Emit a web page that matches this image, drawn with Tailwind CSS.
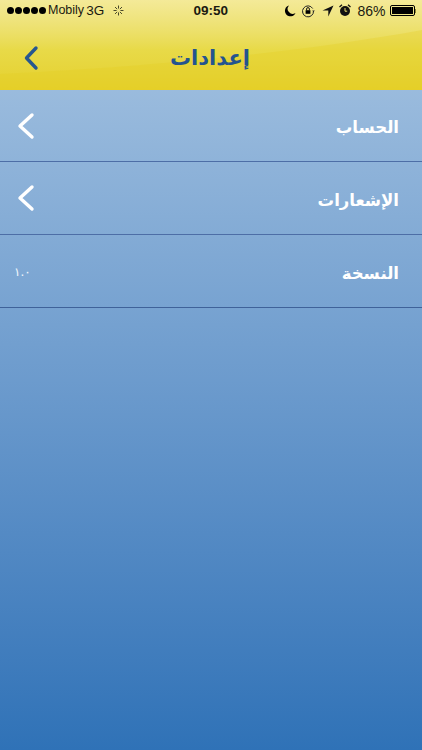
<!DOCTYPE html>
<html lang="ar">

<head>
  <meta charset="UTF-8">
  <meta name="viewport" content="width=device-width, initial-scale=1.0">
  <script src="https://cdn.jsdelivr.net/npm/@tailwindcss/browser@4"></script>
  <title>إعدادات</title>
</head>

<body class="m-0 overflow-hidden">
  <div class="flex flex-col w-[422px] h-[750px] bg-gradient-to-b from-[#a8c5e2] to-[#2f72b7] font-['Liberation_Sans',sans-serif]">

    <!-- header with status bar -->
    <div class="relative h-[90px] shrink-0 overflow-hidden bg-gradient-to-b from-[#f4ea98] via-[#e8da48] via-55% to-[#e5d02a]">
      <svg class="absolute inset-0" width="422" height="90" viewBox="0 0 422 90">
        <path d="M0 74 C120 68 280 56 422 30 L422 90 L0 90 Z" fill="#e3cc22" fill-opacity="0.3" />
      </svg>

      <div class="relative flex items-center h-5 pt-[1px] pl-[7px] pr-[6px] text-[13.5px] leading-5 text-[#1a1a10]">
        <div class="flex items-center gap-[1px] w-[41px]">
          <span class="w-[7px] h-[7px] rounded-full bg-black"></span>
          <span class="w-[7px] h-[7px] rounded-full bg-black"></span>
          <span class="w-[7px] h-[7px] rounded-full bg-black"></span>
          <span class="w-[7px] h-[7px] rounded-full bg-black"></span>
          <span class="w-[7px] h-[7px] rounded-full bg-black"></span>
        </div>
        <span class="-mt-[1px] text-[12.5px]">Mobily</span>
        <span class="ml-[2px] text-[13.5px]">3G</span>
        <svg class="ml-[9px]" width="11" height="11" viewBox="0 0 12 12" stroke="#3a3a20" stroke-width="1" stroke-linecap="round">
          <path d="M6 1v2.500M6 8.500V11M1 6h2.500M8.500 6H11M2.500 2.500l1.700 1.700M7.800 7.800l1.700 1.700M2.500 9.500l1.700-1.700M7.800 4.200l1.700-1.700" />
        </svg>
        <span class="ml-[69px] w-[35px] text-[13.5px] text-center font-semibold">09:50</span>
        <div class="flex items-center ml-auto">
          <svg width="12" height="12" viewBox="0 0 12 12">
            <path d="M5 0.500A5.500 5.500 0 1 0 11.500 8 5 5 0 0 1 5 0.500Z" fill="#000" />
          </svg>
          <svg class="ml-[5px]" width="14" height="14" viewBox="0 0 14 14">
            <path d="M11.700 4.500A5.500 5.500 0 1 0 12.500 7" fill="none" stroke="#222" stroke-width="1" />
            <path d="M13.800 6.500h-2.600l1.300 1.600Z" fill="#222" />
            <rect x="4.600" y="6.200" width="4.800" height="3.600" fill="#000" />
            <path d="M5.600 6.200V5a1.400 1.400 0 0 1 2.800 0v1.200" fill="none" stroke="#000" stroke-width="0.900" />
          </svg>
          <svg class="ml-[7px]" width="12" height="12" viewBox="0 0 12 12">
            <path d="M11.500 0.500L0.500 5.500H6.300V11.500Z" fill="#111" />
          </svg>
          <svg class="ml-[5px]" width="12" height="13" viewBox="0 0 12 13">
            <circle cx="6" cy="7" r="5" fill="#111" />
            <path d="M6 4v3.200h2.200" fill="none" stroke="#e8dc6a" stroke-width="1" />
            <path d="M0.500 3L3 0.800M11.500 3L9 0.800" stroke="#111" stroke-width="1.300" />
          </svg>
          <span class="ml-[6px] text-[14px]">86%</span>
          <div class="flex items-center ml-[4px]">
            <div class="w-[25px] h-[11px] border border-black rounded-[2px] p-[1px]">
              <div class="w-[21px] h-full bg-black"></div>
            </div>
            <div class="w-[1.500px] h-[4px] bg-[#8a8430]"></div>
          </div>
        </div>
      </div>

      <div class="relative flex items-center justify-center h-[70px] pr-[2px]">
        <svg class="absolute left-[23px] top-[25px]" width="16" height="26" viewBox="0 0 16 26">
          <path d="M13 3L3.500 13 13 23" fill="none" stroke="#27578f" stroke-width="3.400" stroke-linecap="round" stroke-linejoin="round" />
        </svg>
        <span dir="rtl" class="mt-[6px] text-[21px] font-bold leading-none text-[#24548f] font-['DejaVu_Sans',sans-serif]">إعدادات</span>
      </div>
    </div>

    <!-- settings rows -->
    <div class="flex flex-col">
      <div class="flex items-center justify-between h-[72px] pl-4 pr-[23px] border-b border-[#4d6ea6]">
        <svg width="20" height="28" viewBox="0 0 20 28">
          <path d="M16 3L4 14 16 25" fill="none" stroke="#fff" stroke-width="3.400" stroke-linecap="round" stroke-linejoin="round" />
        </svg>
        <span dir="rtl" class="pt-[6px] text-[16.5px] font-bold text-white font-['DejaVu_Sans',sans-serif]">الحساب</span>
      </div>
      <div class="flex items-center justify-between h-[73px] pl-4 pr-[23px] border-b border-[#4d6ea6]">
        <svg width="20" height="28" viewBox="0 0 20 28">
          <path d="M16 3L4 14 16 25" fill="none" stroke="#fff" stroke-width="3.400" stroke-linecap="round" stroke-linejoin="round" />
        </svg>
        <span dir="rtl" class="pt-[6px] text-[16.5px] font-bold text-white font-['DejaVu_Sans',sans-serif]">الإشعارات</span>
      </div>
      <div class="flex items-center justify-between h-[73px] pl-[14px] pr-[23px] border-b border-[#3f6299]">
        <span class="pt-[2px] text-[12px] tracking-[2px] text-white/90 font-['DejaVu_Sans',sans-serif]">١.٠</span>
        <span dir="rtl" class="pt-[6px] text-[16.5px] font-bold text-white font-['DejaVu_Sans',sans-serif]">النسخة</span>
      </div>
    </div>
  </div>
</body>

</html>
